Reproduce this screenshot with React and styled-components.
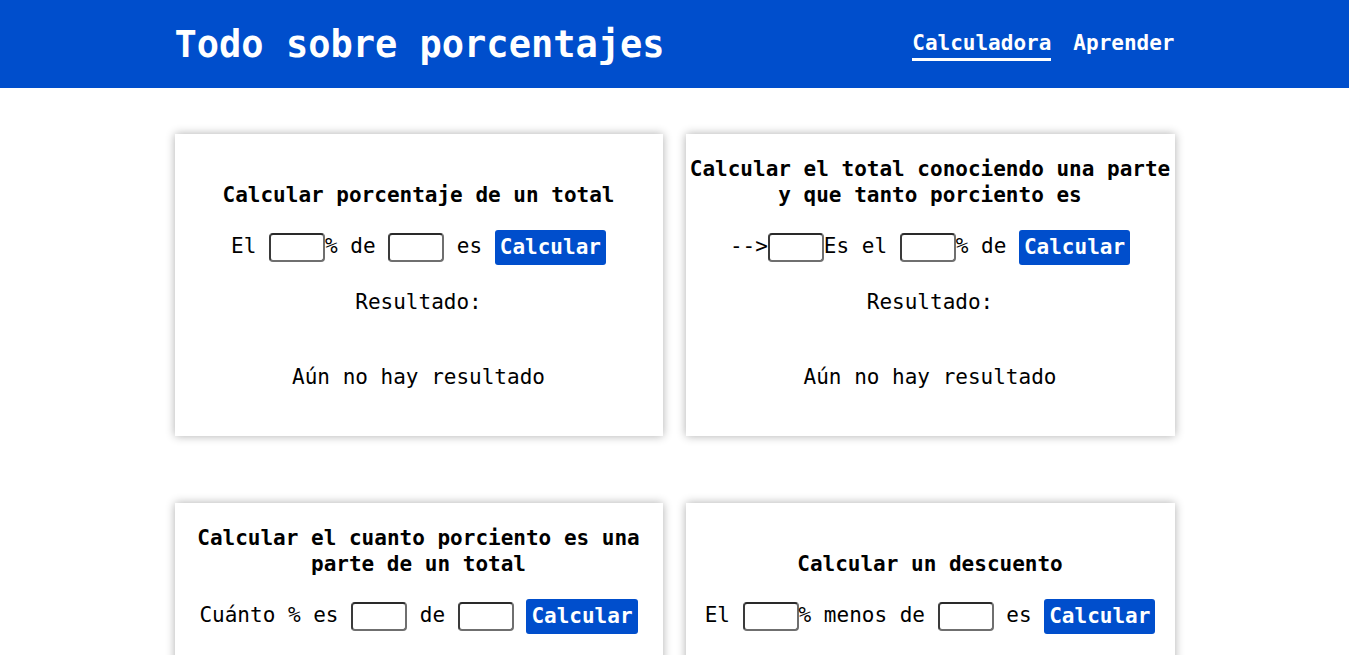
import React from 'react'
import styled, { createGlobalStyle } from 'styled-components'

const GlobalStyle = createGlobalStyle`
  body {
    margin: 0;
    background: #ffffff;
    font-family: "DejaVu Sans Mono", "Liberation Mono", monospace;
    color: #000000;
  }
`

const Header = styled.header`
  height: 88px;
  background-color: #004ecc;
`

const HeaderInner = styled.div`
  max-width: 1000px;
  height: 100%;
  margin: 0 auto;
  display: flex;
  align-items: center;
  justify-content: space-between;
`

const Logo = styled.h1`
  margin: 0;
  font-size: 37px;
  font-weight: 700;
  color: white;
`

const Nav = styled.nav`
  display: flex;
  gap: 22px;
  margin-top: 4px;
`

const NavLink = styled.a`
  font-size: 21px;
  font-weight: 700;
  color: white;
  text-decoration: none;
  padding-bottom: 3px;
  border-bottom: 3px solid ${(p) => (p.$active ? 'white' : 'transparent')};
`

const Main = styled.main`
  max-width: 1000px;
  margin: 46px auto 0;
  display: grid;
  grid-template-columns: 488px 489px;
  column-gap: 23px;
  row-gap: 67px;
`

const Card = styled.section`
  height: 302px;
  box-sizing: border-box;
  background: white;
  box-shadow: 0 0 9px rgba(0, 0, 0, 0.32);
  padding-top: 22px;
  display: flex;
  flex-direction: column;
  align-items: center;
  text-align: center;
`

const Title = styled.h2`
  margin: 0;
  height: 52px;
  font-size: 21px;
  line-height: 26px;
  font-weight: 700;
  display: flex;
  align-items: flex-end;
  justify-content: center;
  padding: 0 4px;
`

const Row = styled.div`
  margin-top: 21px;
  height: 35px;
  line-height: 35px;
  font-size: 21px;
  white-space: pre;
`

const Input = styled.input`
  width: 56px;
  height: 29px;
  box-sizing: border-box;
  border: 2px solid #6f6f6f;
  border-top-color: #2a2a2a;
  border-left-color: #3a3a3a;
  border-radius: 4px;
  padding: 0;
  margin: 0;
  background: white;
  vertical-align: middle;
`

const Button = styled.button`
  height: 35px;
  padding: 0 5px;
  margin: 0;
  background-color: #004ecc;
  border: none;
  border-radius: 3px;
  color: white;
  font-family: inherit;
  font-size: 21px;
  font-weight: 700;
  vertical-align: middle;
  cursor: pointer;
`

const Label = styled.p`
  margin: 25px 0 0;
  font-size: 21px;
  line-height: 26px;
`

const Result = styled.p`
  margin: 49px 0 0;
  font-size: 21px;
  line-height: 26px;
`

const Calculator = ({ title, children }) => (
  <Card>
    <Title>{title}</Title>
    <Row>
      {children}
      <Button>Calcular</Button>
    </Row>
    <Label>Resultado:</Label>
    <Result>Aún no hay resultado</Result>
  </Card>
)

export default function App() {
  return (
    <>
      <GlobalStyle />
      <Header>
        <HeaderInner>
          <Logo>Todo sobre porcentajes</Logo>
          <Nav>
            <NavLink href="#" $active>Calculadora</NavLink>
            <NavLink href="#">Aprender</NavLink>
          </Nav>
        </HeaderInner>
      </Header>
      <Main>
        <Calculator title="Calcular porcentaje de un total">
          {'El '}<Input />{'% de '}<Input />{' es '}
        </Calculator>
        <Calculator title={<span>Calcular el total conociendo una parte<br />y que tanto porciento es</span>}>
          {'-->'}<Input />{'Es el '}<Input />{'% de '}
        </Calculator>
        <Calculator title={<span>Calcular el cuanto porciento es una<br />parte de un total</span>}>
          {'Cuánto % es '}<Input />{' de '}<Input />{' '}
        </Calculator>
        <Calculator title="Calcular un descuento">
          {'El '}<Input />{'% menos de '}<Input />{' es '}
        </Calculator>
      </Main>
    </>
  )
}
